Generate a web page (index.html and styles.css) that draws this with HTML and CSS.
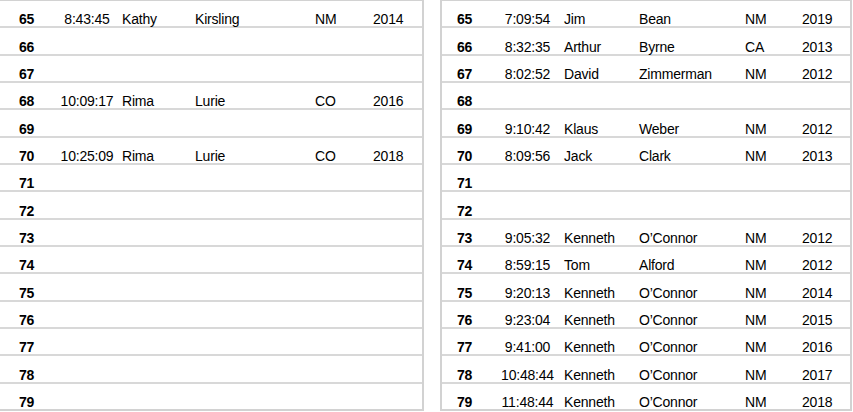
FILE: index.html
```html
<!DOCTYPE html>
<html>
<head>
<meta charset="utf-8">
<link rel="stylesheet" href="styles.css">
</head>
<body>
<div class="page">
  <div class="sheet sheet-left">
    <div class="row"><span class="c num">65</span><span class="c time">8:43:45</span><span class="c first">Kathy</span><span class="c last">Kirsling</span><span class="c state">NM</span><span class="c year">2014</span></div>
    <div class="row"><span class="c num">66</span></div>
    <div class="row"><span class="c num">67</span></div>
    <div class="row"><span class="c num">68</span><span class="c time">10:09:17</span><span class="c first">Rima</span><span class="c last">Lurie</span><span class="c state">CO</span><span class="c year">2016</span></div>
    <div class="row"><span class="c num">69</span></div>
    <div class="row"><span class="c num">70</span><span class="c time">10:25:09</span><span class="c first">Rima</span><span class="c last">Lurie</span><span class="c state">CO</span><span class="c year">2018</span></div>
    <div class="row"><span class="c num">71</span></div>
    <div class="row"><span class="c num">72</span></div>
    <div class="row"><span class="c num">73</span></div>
    <div class="row"><span class="c num">74</span></div>
    <div class="row"><span class="c num">75</span></div>
    <div class="row"><span class="c num">76</span></div>
    <div class="row"><span class="c num">77</span></div>
    <div class="row"><span class="c num">78</span></div>
    <div class="row"><span class="c num">79</span></div>
  </div>
  <div class="sheet sheet-right">
    <div class="row"><span class="c num">65</span><span class="c time">7:09:54</span><span class="c first">Jim</span><span class="c last">Bean</span><span class="c state">NM</span><span class="c year">2019</span></div>
    <div class="row"><span class="c num">66</span><span class="c time">8:32:35</span><span class="c first">Arthur</span><span class="c last">Byrne</span><span class="c state">CA</span><span class="c year">2013</span></div>
    <div class="row"><span class="c num">67</span><span class="c time">8:02:52</span><span class="c first">David</span><span class="c last">Zimmerman</span><span class="c state">NM</span><span class="c year">2012</span></div>
    <div class="row"><span class="c num">68</span></div>
    <div class="row"><span class="c num">69</span><span class="c time">9:10:42</span><span class="c first">Klaus</span><span class="c last">Weber</span><span class="c state">NM</span><span class="c year">2012</span></div>
    <div class="row"><span class="c num">70</span><span class="c time">8:09:56</span><span class="c first">Jack</span><span class="c last">Clark</span><span class="c state">NM</span><span class="c year">2013</span></div>
    <div class="row"><span class="c num">71</span></div>
    <div class="row"><span class="c num">72</span></div>
    <div class="row"><span class="c num">73</span><span class="c time">9:05:32</span><span class="c first">Kenneth</span><span class="c last">O’Connor</span><span class="c state">NM</span><span class="c year">2012</span></div>
    <div class="row"><span class="c num">74</span><span class="c time">8:59:15</span><span class="c first">Tom</span><span class="c last">Alford</span><span class="c state">NM</span><span class="c year">2012</span></div>
    <div class="row"><span class="c num">75</span><span class="c time">9:20:13</span><span class="c first">Kenneth</span><span class="c last">O’Connor</span><span class="c state">NM</span><span class="c year">2014</span></div>
    <div class="row"><span class="c num">76</span><span class="c time">9:23:04</span><span class="c first">Kenneth</span><span class="c last">O’Connor</span><span class="c state">NM</span><span class="c year">2015</span></div>
    <div class="row"><span class="c num">77</span><span class="c time">9:41:00</span><span class="c first">Kenneth</span><span class="c last">O’Connor</span><span class="c state">NM</span><span class="c year">2016</span></div>
    <div class="row"><span class="c num">78</span><span class="c time">10:48:44</span><span class="c first">Kenneth</span><span class="c last">O’Connor</span><span class="c state">NM</span><span class="c year">2017</span></div>
    <div class="row"><span class="c num">79</span><span class="c time">11:48:44</span><span class="c first">Kenneth</span><span class="c last">O’Connor</span><span class="c state">NM</span><span class="c year">2018</span></div>
  </div>
</div>
</body>
</html>
```
FILE: styles.css
```css
* { box-sizing: border-box; }
html, body { margin: 0; padding: 0; background: #fff; }
body {
  font-family: "Liberation Sans", Arial, sans-serif;
  font-size: 14px;
  color: #000;
}
.page {
  display: flex;
  width: 853px;
  height: 412px;
  overflow: hidden;
}
.sheet {
  display: flex;
  flex-direction: column;
  height: 411px;
  border-top: 1px solid #d2d2d2;
  border-right: 2px solid #d2d2d2;
  border-bottom: 2px solid #d2d2d2;
}
.sheet-left { width: 424px; }
.sheet-right {
  width: 412px;
  margin-left: 16px;
  border-left: 2px solid #d2d2d2;
}
.row {
  flex: 1;
  display: grid;
  align-items: end;
  border-bottom: 2px solid #d8d8d8;
  line-height: 14px;
  letter-spacing: -0.2px;
}
.row:last-child { border-bottom: 0; }
.sheet-left .row { grid-template-columns: 55px 64px 73px 120px 58px 1fr; }
.sheet-right .row { grid-template-columns: 53px 65px 76px 106px 57px 1fr; }
.c { white-space: nowrap; }
.num { grid-column: 1; font-weight: bold; padding-left: 19px; }
.sheet-right .num { padding-left: 15px; }
.time { grid-column: 2; text-align: center; }
.first { grid-column: 3; padding-left: 3px; }
.last { grid-column: 4; padding-left: 3px; }
.state { grid-column: 5; padding-left: 3px; }
.year { grid-column: 6; padding-left: 3px; }
.sheet-right .first { padding-left: 4px; }
```
